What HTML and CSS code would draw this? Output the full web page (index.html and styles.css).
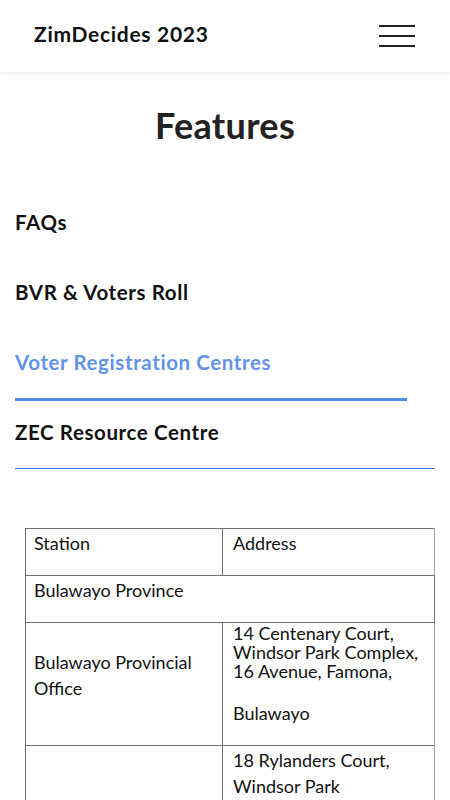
FILE: index.html
```html
<!DOCTYPE html>
<html lang="en">
<head>
<meta charset="utf-8">
<meta name="viewport" content="width=device-width, initial-scale=1">
<title>ZimDecides 2023 - Features</title>
<link rel="stylesheet" href="styles.css">
</head>
<body>
<header class="site-header">
  <a class="brand" href="#">ZimDecides 2023</a>
  <button class="menu-toggle" aria-label="Menu">
    <span class="bar"></span><span class="bar"></span><span class="bar"></span>
  </button>
</header>
<main class="content">
  <h1 class="page-title">Features</h1>
  <ul class="tabs">
    <li class="tab"><a href="#">FAQs</a></li>
    <li class="tab"><a href="#">BVR &amp; Voters Roll</a></li>
    <li class="tab active"><a href="#">Voter Registration Centres</a></li>
    <li class="tab"><a href="#">ZEC Resource Centre</a></li>
  </ul>
  <table class="centres">
    <tbody>
      <tr>
        <td class="col-station"><p>Station</p></td>
        <td class="col-address"><p>Address</p></td>
      </tr>
      <tr>
        <td colspan="2"><p>Bulawayo Province</p></td>
      </tr>
      <tr>
        <td><p>Bulawayo Provincial Office</p></td>
        <td class="col-address"><p class="tight">14 Centenary Court, Windsor Park Complex, 16 Avenue, Famona,</p><p>Bulawayo</p></td>
      </tr>
      <tr>
        <td><p>Bulawayo District Office</p></td>
        <td class="col-address"><p>18 Rylanders Court,<br>Windsor Park<br>Complex, 16 Avenue,<br>Famona,</p><p>Bulawayo</p></td>
      </tr>
    </tbody>
  </table>
</main>
</body>
</html>
```
FILE: styles.css
```css
* { box-sizing: border-box; }

body {
  margin: 0;
  font-family: "Lato", "Liberation Sans", sans-serif;
  color: #111;
  background: #fff;
}

.site-header {
  height: 72px;
  display: flex;
  align-items: center;
  justify-content: space-between;
  padding: 0 35px 0 34px;
  background: #fff;
  box-shadow: 0 2px 3px rgba(0, 0, 0, 0.07);
}

.brand {
  font-size: 21px;
  font-weight: 700;
  color: #111;
  text-decoration: none;
  letter-spacing: 0.7px;
  margin-bottom: 6px;
}

.menu-toggle {
  width: 36px;
  height: 22px;
  padding: 0;
  border: 0;
  background: none;
  display: flex;
  flex-direction: column;
  justify-content: space-between;
}

.menu-toggle .bar {
  display: block;
  height: 2px;
  background: #222;
}

.content {
  padding: 0 15px;
}

.page-title {
  margin: 31px 0 0;
  text-align: center;
  font-size: 36px;
  line-height: 44px;
  font-weight: 700;
  letter-spacing: 0.3px;
  color: #222;
}

.tabs {
  list-style: none;
  margin: 44px 0 0;
  padding: 0;
  border-bottom: 1px solid #3a78d8;
}

.tab {
  margin-right: 28px;
  padding: 17px 0 22px;
  font-size: 20.5px;
  line-height: 28px;
  font-weight: 700;
  letter-spacing: 0.6px;
  border-bottom: 3px solid transparent;
}

.tab:last-child {
  border-bottom: 0;
}

.tab a {
  color: #111;
  text-decoration: none;
}

.tab.active {
  border-bottom-color: #5089e6;
}

.tab.active a {
  color: #6393e8;
}

.centres {
  margin: 59px 0 0 10px;
  width: 410px;
  border-collapse: collapse;
  font-size: 18px;
  color: #111;
}

.centres td {
  border: 1px solid #707070;
  padding: 1px 8px;
  vertical-align: middle;
  line-height: 26px;
}

.centres td.col-address {
  padding-left: 10px;
  border-right-color: #a0a0a0;
}

.col-station { width: 197px; }

.centres p {
  margin: 0 0 18px;
}

.centres p.tight {
  line-height: 19px;
  margin-bottom: 19px;
}
```
